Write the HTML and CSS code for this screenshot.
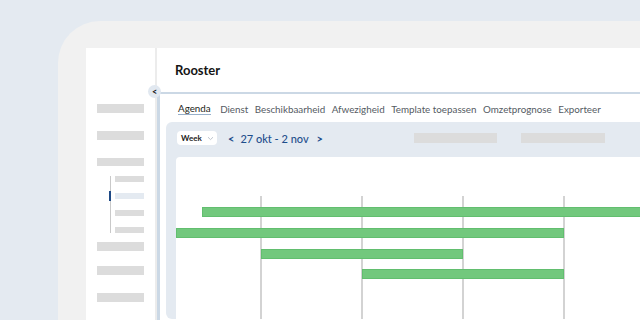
FILE: index.html
```html
<!DOCTYPE html>
<html lang="nl">
<head>
<meta charset="utf-8">
<title>Rooster</title>
<link rel="stylesheet" href="styles.css">
</head>
<body>
<div class="frame">
  <div class="app">
    <aside class="sidebar">
      <div class="sb-item"></div>
      <div class="sb-item"></div>
      <div class="sb-item"></div>
      <div class="sb-sub">
        <div class="sb-subitem"></div>
        <div class="sb-subitem active"></div>
        <div class="sb-subitem"></div>
        <div class="sb-subitem"></div>
      </div>
      <div class="sb-item after-sub"></div>
      <div class="sb-item tight"></div>
      <div class="sb-item"></div>
    </aside>
    <div class="divider"></div>
    <main class="main">
      <header class="header">Rooster</header>
      <button class="collapse" type="button">&lt;</button>
      <div class="content">
        <nav class="tabs">
          <span class="tab active">Agenda</span>
          <span class="tab">Dienst</span>
          <span class="tab">Beschikbaarheid</span>
          <span class="tab">Afwezigheid</span>
          <span class="tab">Template toepassen</span>
          <span class="tab">Omzetprognose</span>
          <span class="tab">Exporteer</span>
        </nav>
        <section class="panel">
          <div class="toolbar">
            <div class="select">Week <span class="chev"><svg width="7" height="5" viewBox="0 0 7 5"><path d="M1 1.2 L3.5 3.6 L6 1.2" fill="none" stroke="#b5bcc6" stroke-width="0.9"/></svg></span></div>
            <div class="range">
              <span class="arrow">&lt;</span>
              <span class="dates">27 okt - 2 nov</span>
              <span class="arrow next">&gt;</span>
            </div>
            <div class="ph ph1"></div>
            <div class="ph ph2"></div>
          </div>
          <div class="chart">
            <div class="vline" style="grid-column: 3"></div>
            <div class="vline" style="grid-column: 4"></div>
            <div class="vline" style="grid-column: 5"></div>
            <div class="vline" style="grid-column: 6"></div>
            <div class="bar" style="grid-row: 3; grid-column: 2 / 7"></div>
            <div class="bar" style="grid-row: 5; grid-column: 1 / 6"></div>
            <div class="bar" style="grid-row: 7; grid-column: 3 / 5"></div>
            <div class="bar" style="grid-row: 9; grid-column: 4 / 6"></div>
          </div>
        </section>
      </div>
    </main>
  </div>
</div>
</body>
</html>
```

FILE: styles.css
```css
* { box-sizing: border-box; }
html, body {
  margin: 0;
  padding: 0;
  width: 640px;
  height: 320px;
  overflow: hidden;
  background: #e4eaf1;
  font-family: Lato, "Open Sans", sans-serif;
}
.frame {
  margin: 21px 0 0 58px;
  width: 582px;
  height: 299px;
  background: #f1f1f1;
  border-top-left-radius: 42px;
  padding: 27px 0 0 28px;
  overflow: hidden;
}
.app {
  display: flex;
  background: #fff;
  height: 100%;
  width: 554px;
}
.sidebar {
  width: 69px;
  flex: none;
  padding: 56px 0 0 11px;
  display: flex;
  flex-direction: column;
}
.sb-item {
  width: 47px;
  height: 9px;
  background: #dcdcdc;
  margin-bottom: 18px;
}
.sb-item.after-sub { margin-top: 9px; margin-bottom: 15px; }
.sb-sub {
  position: relative;
  margin: -8px 0 0 13px;
  border-left: 1px solid #c9c9c9;
  padding-left: 4px;
  display: flex;
  flex-direction: column;
  gap: 11px;
}
.sb-subitem {
  width: 29px;
  height: 6px;
  background: #dcdcdc;
}
.sb-subitem.active {
  position: relative;
  background: #e4eaf1;
}
.sb-subitem.active::before {
  content: "";
  position: absolute;
  left: -6px;
  top: -2px;
  width: 2px;
  height: 10px;
  background: #1f4a86;
}
.divider {
  width: 2px;
  flex: none;
  background: #ececec;
}
.main {
  position: relative;
  flex: 1;
  display: flex;
  flex-direction: column;
  min-width: 0;
}
.header {
  height: 44px;
  flex: none;
  display: flex;
  align-items: center;
  padding-left: 18px;
  font-size: 13px;
  font-weight: 700;
  color: #151515;
}
.collapse {
  position: absolute;
  left: -9px;
  top: 37px;
  width: 13px;
  height: 13px;
  padding: 0;
  border: none;
  border-radius: 50%;
  background: #e1e8f0;
  color: #111;
  font: 700 9px/13px Lato, sans-serif;
  text-align: center;
}
.content {
  flex: 1;
  display: flex;
  flex-direction: column;
  border-top: 2px solid #cbd8e5;
  border-left: 3px solid #cbd8e5;
  padding-left: 6px;
}
.tabs {
  height: 28px;
  flex: none;
  display: flex;
  align-items: center;
  gap: 6.5px;
  padding: 2px 0 0 12px;
  font-size: 9.8px;
  color: #555b63;
  white-space: nowrap;
}
.tab.active {
  color: #1d1f22;
  border-bottom: 1.5px solid #98b0ca;
  margin-right: 3px;
  line-height: 11px;
}
.panel {
  flex: 1;
  background: #e4eaf1;
  border-radius: 6px 0 0 6px;
  padding: 0 0 0 10px;
  margin-bottom: 1px;
  display: flex;
  flex-direction: column;
  width: 640px;
}
.toolbar {
  height: 35px;
  flex: none;
  display: flex;
  align-items: center;
  padding: 0 0 3px 1px;
}
.select {
  width: 40px;
  height: 14px;
  background: #fff;
  border-radius: 4px;
  font-size: 8px;
  font-weight: 700;
  color: #222;
  display: flex;
  align-items: center;
  padding-left: 4px;
  gap: 5px;
}
.chev { display: flex; }
.range {
  display: flex;
  align-items: center;
  margin-left: 11px;
  color: #1d4e8c;
  font-size: 11px;
  font-weight: 500;
  gap: 6px;
}
.range .arrow { font-size: 11px; font-weight: 700; }
.range .next { margin-left: 2px; }
.ph {
  height: 10px;
  background: #dcdcdc;
}
.ph1 { width: 83px; margin-left: 91px; }
.ph2 { width: 84px; margin-left: 24px; }
.chart {
  flex: 1;
  background: #fff;
  border-top-left-radius: 4px;
  display: grid;
  grid-template-columns: 26px 59px 101px 101px 101px 1fr;
  grid-template-rows: 39px 11px 10px 11px 10px 11px 10px 10px 10px 1fr;
}
.vline {
  grid-row: 2 / -1;
  width: 2px;
  margin-left: -1px;
  background: #d3d3d3;
}
.bar {
  background: #72c87d;
  border: 1px solid #62be6f;
}
```
